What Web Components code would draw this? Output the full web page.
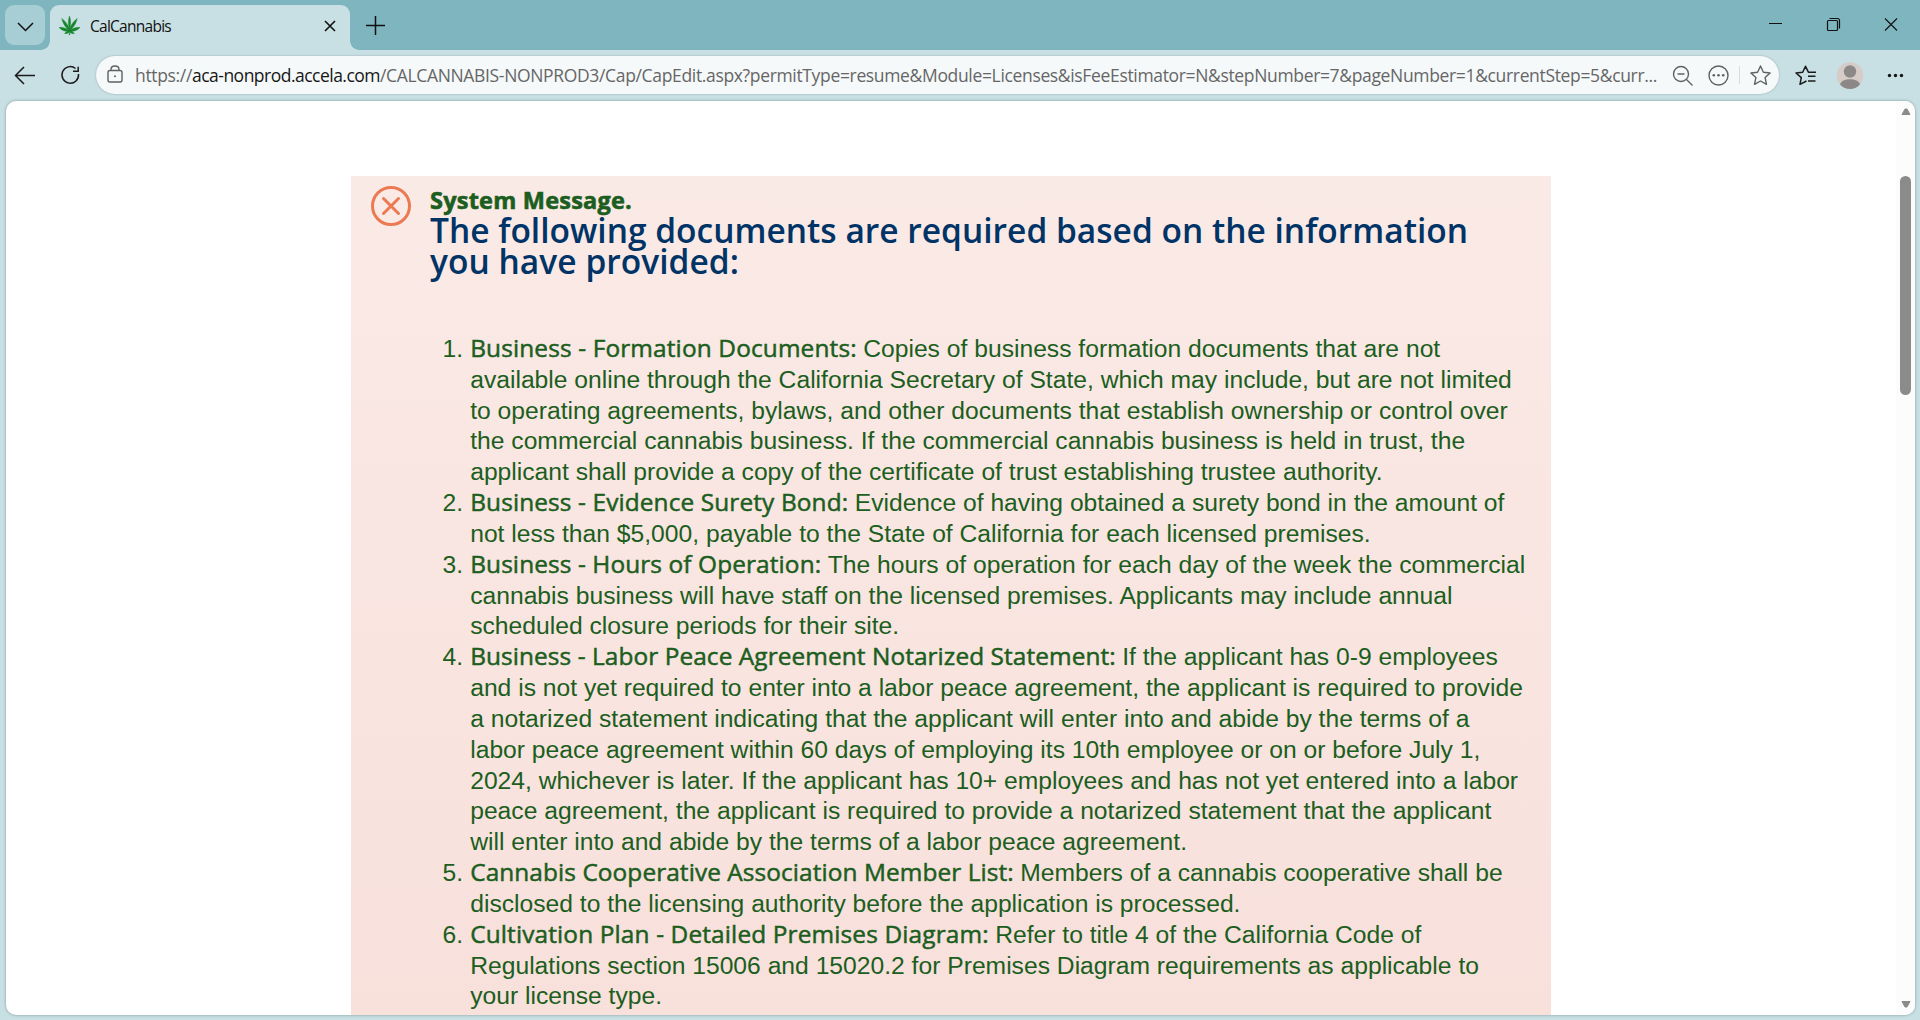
<!DOCTYPE html>
<html lang="en">
<head>
<meta charset="utf-8">
<title>CalCannabis</title>
<style>
    body {
        margin: 0;
        width: 1920px;
        height: 1020px;
        overflow: hidden;
        background: #c8dfe3;
        font-family: "Liberation Sans", Arial, sans-serif;
    }
</style>
</head>
<body>
<browser-window>
    <tab-strip slot="tabs">CalCannabis</tab-strip>
    <address-bar slot="toolbar"></address-bar>
    <page-view slot="page">
        <system-message>
            <fit-text slot="title" width="202">System Message.</fit-text>
            <fit-text slot="heading" width="1038">The following documents are required based on the information</fit-text>
            <fit-text slot="heading" width="309">you have provided:</fit-text>
            <document-list></document-list>
        </system-message>
    </page-view>
</browser-window>

<script>
// Single line of text tracked out to an exact width
class FitText extends HTMLElement {
    constructor() {
        super();
        this.attachShadow({ mode: 'open' });
        this.shadowRoot.innerHTML = `
            <style>
                :host { display: inline-block; white-space: pre; flex: none; }
            </style>
            <span><slot></slot></span>
        `.replace(/\n\s+/g, '');
    }

    connectedCallback() {
        requestAnimationFrame(() => this.fit());
        this.fit();
    }

    fit() {
        const target = parseFloat(this.getAttribute('width'));
        const length = this.textContent.length;
        if (!target || !length) {
            return;
        }
        const span = this.shadowRoot.querySelector('span');
        span.style.letterSpacing = '0px';
        const natural = span.getBoundingClientRect().width;
        span.style.letterSpacing = (target - natural) / length + 'px';
    }
}

class BrowserWindow extends HTMLElement {
    constructor() {
        super();
        this.attachShadow({ mode: 'open' });
        this.shadowRoot.innerHTML = `
            <style>
                :host {
                    display: grid;
                    grid-template-rows: 50px 51px 914px;
                    height: 1020px;
                    background: #c8dfe3;
                }
            </style>
            <slot name="tabs"></slot>
            <slot name="toolbar"></slot>
            <slot name="page"></slot>
        `;
    }
}

class TabStrip extends HTMLElement {
    constructor() {
        super();
        this.attachShadow({ mode: 'open' });
        this.shadowRoot.innerHTML = `
            <style>
                :host {
                    display: flex;
                    background: #7eb5bf;
                    font-family: "Open Sans", "Noto Sans", sans-serif;
                    color: #111;
                }
                svg { display: block; fill: none; stroke: #111; flex: none; }
                .menu {
                    width: 40px;
                    height: 40px;
                    margin: 5px 5px 0;
                    border-radius: 9px;
                    background: #a8ced5;
                }
                .tab {
                    position: relative;
                    display: flex;
                    align-items: center;
                    box-sizing: border-box;
                    width: 300px;
                    height: 45px;
                    margin-top: 5px;
                    padding: 0 14px 4px 9px;
                    border-radius: 9px 9px 0 0;
                    background: #c8dfe3;
                    font-size: 15.500px;
                }
                .tab::before, .tab::after {
                    content: "";
                    position: absolute;
                    bottom: 0;
                    width: 9px;
                    height: 9px;
                }
                .tab::before {
                    left: -9px;
                    background: radial-gradient(circle at 0 0, transparent 8.5px, #c8dfe3 9px);
                }
                .tab::after {
                    right: -9px;
                    background: radial-gradient(circle at 100% 0, transparent 8.5px, #c8dfe3 9px);
                }
                .leaf { fill: #16852b; stroke: #16852b; stroke-width: 0.4; margin-right: 10px; overflow: visible; }
                .close { margin-left: auto; }
                .plus { margin: 15px 0 0 15px; }
                .controls { display: flex; margin-left: auto; }
            </style>
            <div class="menu">
                <svg width="40" height="40" stroke-width="1.5"><path d="M13 18l7.5 7.5L28 18"/></svg>
            </div>
            <div class="tab">
                <svg class="leaf" width="21" height="20" viewBox="0 0 21 20">
                    <path d="M10.500 0C9 4 9.200 8 10.200 12.500C9 9 6.500 5 2.700 2.500C3.800 7 6 10.500 9 14C6.500 12 3 11 0 11.500C2.500 14.300 5.500 15.300 8.800 15.400C7.500 15.800 6.200 16.400 5.500 17.500C7.500 17.900 9 17.300 10.200 16.300L10.200 19H10.800L10.800 16.300C12 17.300 13.500 17.900 15.500 17.500C14.800 16.400 13.500 15.800 12.200 15.400C15.500 15.300 18.500 14.300 21 11.500C18 11 14.500 12 12 14C15 10.500 17.200 7 18.300 2.500C14.500 5 12 9 10.800 12.500C11.800 8 12 4 10.500 0Z"/>
                </svg>
                <fit-text width="81"></fit-text>
                <svg class="close" width="12" height="12" stroke-width="1.6"><path d="M1 1l10 10M11 1L1 11"/></svg>
            </div>
            <svg class="plus" width="21" height="21" stroke-width="1.5"><path d="M1 10.500H20M10.500 1V20"/></svg>
            <div class="controls">
                <svg width="58" height="50" stroke-width="1"><path d="M22 23.500H35"/></svg>
                <svg width="58" height="50" stroke-width="1.200"><rect x="22.500" y="20.500" width="10" height="10" rx="1"/><path d="M24.500 18.500H32.500Q34.500 18.500 34.500 20.500V28.500"/></svg>
                <svg width="57" height="50" stroke-width="1.100"><path d="M22 18.500l12 12M34 18.500l-12 12"/></svg>
            </div>
        `;
        this.shadowRoot.querySelector('fit-text').textContent = this.textContent.trim();
    }
}

class AddressBar extends HTMLElement {
    constructor() {
        super();
        this.attachShadow({ mode: 'open' });
        this.shadowRoot.innerHTML = `
            <style>
                :host {
                    display: flex;
                    align-items: flex-start;
                    font-family: "Open Sans", "Noto Sans", sans-serif;
                }
                svg { display: block; flex: none; fill: none; stroke: #1b1b1b; stroke-width: 1.5; }
                .pill {
                    display: flex;
                    align-items: center;
                    box-sizing: border-box;
                    width: 1683px;
                    height: 38px;
                    margin-top: 6px;
                    border-radius: 19px;
                    background: #f5f9fa;
                    box-shadow: 0 0 2px #8fa5a9;
                    font-size: 17.500px;
                    line-height: 36px;
                    color: #666;
                }
                .pill svg { stroke: #5e6263; stroke-width: 1.4; }
                .host { color: #161616; }
                .gap { width: 12px; flex: none; }
            </style>
            <svg width="96" height="50">
                <path d="M35 25.500H16M24 17l-8.500 8.500L24 34"/>
                <path d="M78.500 24A8.300 8.300 0 1 1 75.500 18.500M78.200 16.800V21.300H73"/>
            </svg>
            <div class="pill">
                <svg width="39" height="38">
                    <rect x="12" y="14.500" width="14" height="11.500" rx="2"/>
                    <path d="M15 14.500V13.500Q15 10 19 10Q23 10 23 13.500V14.500"/>
                    <circle cx="19" cy="20.300" r="1" fill="#5e6263" stroke="none"/>
                </svg>
                <fit-text width="57">https://</fit-text>
                <fit-text class="host" width="188">aca-nonprod.accela.com</fit-text>
                <fit-text width="1277">/CALCANNABIS-NONPROD3/Cap/CapEdit.aspx?permitType=resume&amp;Module=Licenses&amp;isFeeEstimator=N&amp;stepNumber=7&amp;pageNumber=1&amp;currentStep=5&amp;curr...</fit-text>
                <div class="gap"></div>
                <svg width="110" height="38">
                    <circle cx="12" cy="18" r="7.500"/><path d="M8.500 18H15.500M17.500 23.500l6 6"/>
                    <circle cx="49.500" cy="19.500" r="9.500"/>
                    <g fill="#5e6263" stroke="none"><circle cx="44.800" cy="19.300" r="1.300"/><circle cx="49.500" cy="19.300" r="1.300"/><circle cx="54.200" cy="19.300" r="1.300"/></g>
                    <path stroke="#d8dddf" stroke-width="1" d="M70.500 10V28"/>
                    <path stroke-linejoin="round" d="M91.500 10l2.900 6.200 6.700.8-5 4.600 1.400 6.700-6-3.300-6 3.300 1.400-6.700-5-4.600 6.700-.8z"/>
                </svg>
            </div>
            <svg width="141" height="50">
                <path stroke-linejoin="round" d="M27.500 31L21 34.300 22.300 27.600 17 23l6.700-.8L26.500 16.300l2.900 5.900H37M29 26.200H36.500M29 31H36.500"/>
                <circle cx="71" cy="25.500" r="13.300" fill="#d5ccc8" stroke="none"/>
                <circle cx="71" cy="21.500" r="6.200" fill="#8c8887" stroke="none"/>
                <path d="M61 34.500C62.500 27.500 79.500 27.500 81 34.500C75.500 40.500 66.500 40.500 61 34.500Z" fill="#8c8887" stroke="none"/>
                <g fill="#161616" stroke="none"><circle cx="110.500" cy="25.500" r="1.700"/><circle cx="116.500" cy="25.500" r="1.700"/><circle cx="122.500" cy="25.500" r="1.700"/></g>
            </svg>
        `;
    }
}

class PageView extends HTMLElement {
    constructor() {
        super();
        this.attachShadow({ mode: 'open' });
        this.shadowRoot.innerHTML = `
            <style>
                :host {
                    display: flex;
                    width: 1909px;
                    height: 914px;
                    margin-left: 6px;
                    overflow: hidden;
                    border-radius: 10px;
                    background: #fff;
                    box-shadow: 0 0 3px #7f9699;
                }
                main { flex: 1; padding: 75px 0 0 345px; }
                .scroll {
                    display: flex;
                    flex-direction: column;
                    align-items: center;
                    width: 19px;
                    background: #fcfcfc;
                }
                .thumb {
                    width: 11px;
                    height: 219px;
                    margin-top: 60px;
                    border-radius: 6px;
                    background: #8b8b8b;
                }
                svg { display: block; fill: #8b8b8b; stroke: #8b8b8b; stroke-linejoin: round; }
                .up { margin: 7px 0 0; }
                .down { margin: auto 0 7px; }
            </style>
            <main><slot></slot></main>
            <div class="scroll">
                <svg class="up" width="10" height="8"><path d="M1 6.500H9L6 1H4Z"/></svg>
                <div class="thumb"></div>
                <svg class="down" width="10" height="8"><path d="M1 1.500H9L6 7H4Z"/></svg>
            </div>
        `;
    }
}

class SystemMessage extends HTMLElement {
    constructor() {
        super();
        this.attachShadow({ mode: 'open' });
        this.shadowRoot.innerHTML = `
            <style>
                :host {
                    display: flex;
                    box-sizing: border-box;
                    width: 1200px;
                    height: 845px;
                    padding: 10px 0 0 20px;
                    background: linear-gradient(#faeae6, #f8e0db);
                }
                svg { flex: none; fill: none; stroke: #eb7a52; stroke-width: 3; stroke-linecap: round; }
                .body { margin-left: 19px; }
                .title, .heading { font-family: "Open Sans", Lato, sans-serif; }
                .title {
                    height: 29px;
                    line-height: 28px;
                    font-size: 23.500px;
                    font-weight: 700;
                    color: #1b5e20;
                    -webkit-text-stroke: 0.600px #1b5e20;
                }
                .heading {
                    display: flex;
                    flex-direction: column;
                    height: 119px;
                    line-height: 31px;
                    font-size: 33.500px;
                    font-weight: 600;
                    color: #003366;
                }
            </style>
            <svg width="40" height="40"><circle cx="20" cy="20" r="18.500"/><path d="M12.500 12.500l15 15M27.500 12.500L12.500 27.500"/></svg>
            <div class="body">
                <div class="title"><slot name="title"></slot></div>
                <div class="heading"><slot name="heading"></slot></div>
                <slot></slot>
            </div>
        `;
    }
}

// name, width of the name, then the lines of the description
const DOCUMENTS = [
    ['Business - Formation Documents: ', 393, [
        'Copies of business formation documents that are not',
        'available online through the California Secretary of State, which may include, but are not limited',
        'to operating agreements, bylaws, and other documents that establish ownership or control over',
        'the commercial cannabis business. If the commercial cannabis business is held in trust, the',
        'applicant shall provide a copy of the certificate of trust establishing trustee authority.']],
    ['Business - Evidence Surety Bond: ', 384.5, [
        'Evidence of having obtained a surety bond in the amount of',
        'not less than $5,000, payable to the State of California for each licensed premises.']],
    ['Business - Hours of Operation: ', 357.5, [
        'The hours of operation for each day of the week the commercial',
        'cannabis business will have staff on the licensed premises. Applicants may include annual',
        'scheduled closure periods for their site.']],
    ['Business - Labor Peace Agreement Notarized Statement: ', 652, [
        'If the applicant has 0-9 employees',
        'and is not yet required to enter into a labor peace agreement, the applicant is required to provide',
        'a notarized statement indicating that the applicant will enter into and abide by the terms of a',
        'labor peace agreement within 60 days of employing its 10th employee or on or before July 1,',
        '2024, whichever is later. If the applicant has 10+ employees and has not yet entered into a labor',
        'peace agreement, the applicant is required to provide a notarized statement that the applicant',
        'will enter into and abide by the terms of a labor peace agreement.']],
    ['Cannabis Cooperative Association Member List: ', 550, [
        'Members of a cannabis cooperative shall be',
        'disclosed to the licensing authority before the application is processed.']],
    ['Cultivation Plan - Detailed Premises Diagram: ', 525, [
        'Refer to title 4 of the California Code of',
        'Regulations section 15006 and 15020.2 for Premises Diagram requirements as applicable to',
        'your license type.']]
];

class DocumentList extends HTMLElement {
    constructor() {
        super();
        this.attachShadow({ mode: 'open' });
        this.shadowRoot.innerHTML = `
            <style>
                :host {
                    display: block;
                    font-size: 24.670px;
                    line-height: 30.840px;
                    color: #1b5e20;
                }
                .item { display: grid; grid-template-columns: 40.200px 1fr; }
                .number { text-align: right; padding-right: 7px; }
                .number, .line { height: 30.840px; white-space: pre; }
                .line { display: flex; align-items: baseline; }
                .name {
                    font-family: "Open Sans", Lato, sans-serif;
                    font-size: 24.400px;
                    font-weight: 500;
                    line-height: 28px;
                    -webkit-text-stroke: 0.500px #1b5e20;
                }
            </style>
            <div class="items"></div>
        `;

        const items = this.shadowRoot.querySelector('.items');
        DOCUMENTS.forEach(([name, width, lines], index) => {
            const item = document.createElement('div');
            item.className = 'item';
            item.innerHTML = `
                <div class="number">${index + 1}.</div>
                <div class="text">${lines.map((line, i) => `<div class="line">${i === 0 ? `<fit-text class="name" width="${width}">${name}</fit-text>` : ''}<span>${line}</span></div>`).join('')}</div>
            `;
            items.appendChild(item);
        });
    }
}

customElements.define('fit-text', FitText);
customElements.define('browser-window', BrowserWindow);
customElements.define('tab-strip', TabStrip);
customElements.define('address-bar', AddressBar);
customElements.define('page-view', PageView);
customElements.define('system-message', SystemMessage);
customElements.define('document-list', DocumentList);
</script>
</body>
</html>
